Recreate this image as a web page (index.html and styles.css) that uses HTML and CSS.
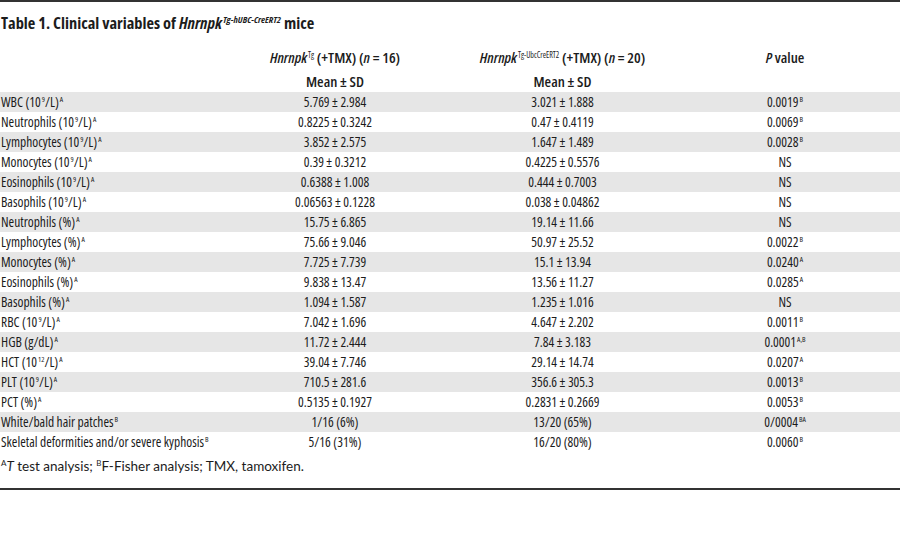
FILE: index.html
```html
<!DOCTYPE html>
<html>
<head>
<meta charset="utf-8">
<link rel="stylesheet" href="styles.css">
</head>
<body>
<div class="frame">
  <h1 class="title">Table 1. Clinical variables of <i>Hnrnpk<sup class="tsup">Tg-hUBC-CreERT2</sup></i> mice</h1>
  <div class="grid">
    <div class="hrow top">
      <div class="c lab"></div>
      <div class="c"><i>Hnrnpk</i><sup class="s">Tg</sup> (+TMX) (<i>n</i> = 16)</div>
      <div class="c"><i>Hnrnpk</i><sup class="s">Tg-UbcCreERT2</sup> (+TMX) (<i>n</i> = 20)</div>
      <div class="c"><i>P</i> value</div>
    </div>
    <div class="hrow sub">
      <div class="c lab"></div>
      <div class="c">Mean ± SD</div>
      <div class="c">Mean ± SD</div>
      <div class="c"></div>
    </div>
    <div class="row sh"><div class="c lab">WBC (10<sup class="s">9</sup>/L)<sup class="s">A</sup></div><div class="c">5.769 ± 2.984</div><div class="c">3.021 ± 1.888</div><div class="c">0.0019<sup class="s">B</sup></div></div>
    <div class="row"><div class="c lab">Neutrophils (10<sup class="s">9</sup>/L)<sup class="s">A</sup></div><div class="c">0.8225 ± 0.3242</div><div class="c">0.47 ± 0.4119</div><div class="c">0.0069<sup class="s">B</sup></div></div>
    <div class="row sh"><div class="c lab">Lymphocytes (10<sup class="s">9</sup>/L)<sup class="s">A</sup></div><div class="c">3.852 ± 2.575</div><div class="c">1.647 ± 1.489</div><div class="c">0.0028<sup class="s">B</sup></div></div>
    <div class="row"><div class="c lab">Monocytes (10<sup class="s">9</sup>/L)<sup class="s">A</sup></div><div class="c">0.39 ± 0.3212</div><div class="c">0.4225 ± 0.5576</div><div class="c">NS</div></div>
    <div class="row sh"><div class="c lab">Eosinophils (10<sup class="s">9</sup>/L)<sup class="s">A</sup></div><div class="c">0.6388 ± 1.008</div><div class="c">0.444 ± 0.7003</div><div class="c">NS</div></div>
    <div class="row"><div class="c lab">Basophils (10<sup class="s">9</sup>/L)<sup class="s">A</sup></div><div class="c">0.06563 ± 0.1228</div><div class="c">0.038 ± 0.04862</div><div class="c">NS</div></div>
    <div class="row sh"><div class="c lab">Neutrophils (%)<sup class="s">A</sup></div><div class="c">15.75 ± 6.865</div><div class="c">19.14 ± 11.66</div><div class="c">NS</div></div>
    <div class="row"><div class="c lab">Lymphocytes (%)<sup class="s">A</sup></div><div class="c">75.66 ± 9.046</div><div class="c">50.97 ± 25.52</div><div class="c">0.0022<sup class="s">B</sup></div></div>
    <div class="row sh"><div class="c lab">Monocytes (%)<sup class="s">A</sup></div><div class="c">7.725 ± 7.739</div><div class="c">15.1 ± 13.94</div><div class="c">0.0240<sup class="s">A</sup></div></div>
    <div class="row"><div class="c lab">Eosinophils (%)<sup class="s">A</sup></div><div class="c">9.838 ± 13.47</div><div class="c">13.56 ± 11.27</div><div class="c">0.0285<sup class="s">A</sup></div></div>
    <div class="row sh"><div class="c lab">Basophils (%)<sup class="s">A</sup></div><div class="c">1.094 ± 1.587</div><div class="c">1.235 ± 1.016</div><div class="c">NS</div></div>
    <div class="row"><div class="c lab">RBC (10<sup class="s">9</sup>/L)<sup class="s">A</sup></div><div class="c">7.042 ± 1.696</div><div class="c">4.647 ± 2.202</div><div class="c">0.0011<sup class="s">B</sup></div></div>
    <div class="row sh"><div class="c lab">HGB (g/dL)<sup class="s">A</sup></div><div class="c">11.72 ± 2.444</div><div class="c">7.84 ± 3.183</div><div class="c">0.0001<sup class="s">A,B</sup></div></div>
    <div class="row"><div class="c lab">HCT (10<sup class="s">12</sup>/L)<sup class="s">A</sup></div><div class="c">39.04 ± 7.746</div><div class="c">29.14 ± 14.74</div><div class="c">0.0207<sup class="s">A</sup></div></div>
    <div class="row sh"><div class="c lab">PLT (10<sup class="s">9</sup>/L)<sup class="s">A</sup></div><div class="c">710.5 ± 281.6</div><div class="c">356.6 ± 305.3</div><div class="c">0.0013<sup class="s">B</sup></div></div>
    <div class="row"><div class="c lab">PCT (%)<sup class="s">A</sup></div><div class="c">0.5135 ± 0.1927</div><div class="c">0.2831 ± 0.2669</div><div class="c">0.0053<sup class="s">B</sup></div></div>
    <div class="row sh"><div class="c lab">White/bald hair patches<sup class="s">B</sup></div><div class="c">1/16 (6%)</div><div class="c">13/20 (65%)</div><div class="c">0/0004<sup class="s">BA</sup></div></div>
    <div class="row"><div class="c lab">Skeletal deformities and/or severe kyphosis<sup class="s">B</sup></div><div class="c">5/16 (31%)</div><div class="c">16/20 (80%)</div><div class="c">0.0060<sup class="s">B</sup></div></div>
  </div>
  <p class="foot"><sup class="fs">A</sup><i>T</i> test analysis; <sup class="fs">B</sup>F-Fisher analysis; TMX, tamoxifen.</p>
</div>
</body>
</html>
```
FILE: styles.css
```css
html, body {
  margin: 0;
  padding: 0;
  background: #fff;
}
body {
  color: #1c1c1c;
  font-family: "Open Sans", sans-serif;
  font-stretch: 75%;
}
.frame {
  width: 900px;
  border-top: 2px solid #333;
  border-bottom: 2px solid #333;
  box-sizing: border-box;
  height: 490px;
}
.title {
  margin: 0;
  padding: 11px 0 0 1px;
  height: 34px;
  box-sizing: border-box;
  font-family: "Open Sans", sans-serif;
  font-stretch: 75%;
  font-size: 16.4px;
  font-weight: 700;
  line-height: 20px;
}
.tsup {
  font-size: 9.5px;
  line-height: 0;
  vertical-align: 6px;
  padding-left: 1px;
}
.grid {
  display: flex;
  flex-direction: column;
  font-size: 13.5px;
}
.hrow, .row {
  display: grid;
  grid-template-columns: 230px 210px 245px 200px 1fr;
  align-items: center;
}
.hrow {
  font-weight: 600;
  font-size: 15px;
}
.hrow.top {
  height: 34px;
  padding-top: 8px;
  box-sizing: border-box;
}
.hrow.sub {
  height: 22px;
}
.row {
  height: 20px;
}
.row.sh {
  background: #e6e6e6;
}
.c {
  text-align: center;
  white-space: nowrap;
}
.c.lab {
  text-align: left;
  padding-left: 1px;
}
.s {
  font-size: 7.5px;
  line-height: 0;
  vertical-align: 5px;
  padding-left: 1px;
}
.hrow .s {
  font-weight: 400;
  font-size: 8px;
}
.foot {
  margin: 0;
  padding: 4px 0 0 1px;
  font-family: "Lato", "Noto Sans", sans-serif;
  font-stretch: 100%;
  font-size: 13.5px;
  line-height: 20px;
}
.fs {
  font-size: 8px;
  line-height: 0;
  vertical-align: 5px;
}
```
